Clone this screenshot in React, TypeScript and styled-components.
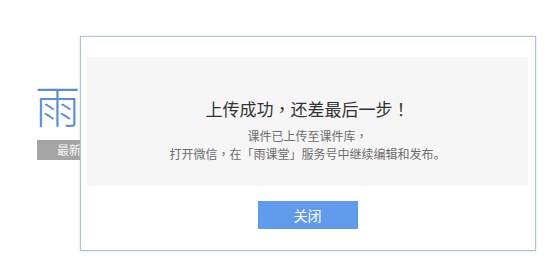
import styled, { createGlobalStyle } from "styled-components";

const GlobalStyle = createGlobalStyle`
  html, body {
    margin: 0;
    padding: 0;
    background: #ffffff;
  }
  body {
    font-family: "Noto Sans CJK SC", "Liberation Sans", sans-serif;
  }
`;

const Page = styled.div`
  position: relative;
  width: 558px;
  height: 277px;
  overflow: hidden;
  background: #ffffff;
`;

const Backdrop = styled.div`
  display: flex;
  flex-direction: column;
  align-items: flex-start;
  padding: 80px 0 0 35px;
`;

const Brand = styled.div`
  font-size: 45px;
  font-weight: 300;
  line-height: 50px;
  color: #5a8fd8;
  letter-spacing: 2px;
`;

const Badge = styled.span`
  margin-top: 10px;
  margin-left: 2px;
  width: 120px;
  height: 20px;
  padding-left: 20px;
  box-sizing: border-box;
  background: #a5a5a5;
  color: #f7f7f7;
  font-size: 12px;
  line-height: 20px;
`;

const Dialog = styled.div`
  position: absolute;
  left: 80px;
  top: 36px;
  width: 456px;
  height: 215px;
  box-sizing: border-box;
  background: #ffffff;
  border: 1px solid #adc3da;
  box-shadow: 0 0 2px rgba(150, 175, 205, 0.5);
  padding: 20px 7px 0 6px;
  display: flex;
  flex-direction: column;
  align-items: center;
`;

const Panel = styled.div`
  align-self: stretch;
  height: 129px;
  box-sizing: border-box;
  padding-top: 40px;
  background: #f6f6f6;
  display: flex;
  flex-direction: column;
  align-items: center;
  text-align: center;
`;

const Title = styled.div`
  font-size: 17px;
  line-height: 24px;
  color: #333333;
`;

const Message = styled.div`
  margin-top: 6px;
  font-size: 12px;
  line-height: 18px;
  color: #6c6c6c;
`;

// full-width marks sit centred in their cell in the screenshot
const Punct = styled.span`
  font-family: "Noto Sans CJK TC", "Noto Sans CJK SC", sans-serif;
`;

const CloseButton = styled.button`
  margin-top: 15px;
  width: 100px;
  height: 28px;
  border: none;
  border-radius: 0;
  background: #5f9bea;
  color: #ffffff;
  font-family: inherit;
  font-size: 14px;
  line-height: 28px;
  padding: 0;
  cursor: pointer;
`;

export default function App() {
  return (
    <Page>
      <GlobalStyle />
      <Backdrop>
        <Brand>雨课堂</Brand>
        <Badge>最新动态</Badge>
      </Backdrop>
      <Dialog>
        <Panel>
          <Title>
            上传成功<Punct>，</Punct>还差最后一步<Punct>！</Punct>
          </Title>
          <Message>
            课件已上传至课件库<Punct>，</Punct>
            <br />
            打开微信<Punct>，</Punct>在「雨课堂」服务号中继续编辑和发布。
          </Message>
        </Panel>
        <CloseButton>关闭</CloseButton>
      </Dialog>
    </Page>
  );
}
